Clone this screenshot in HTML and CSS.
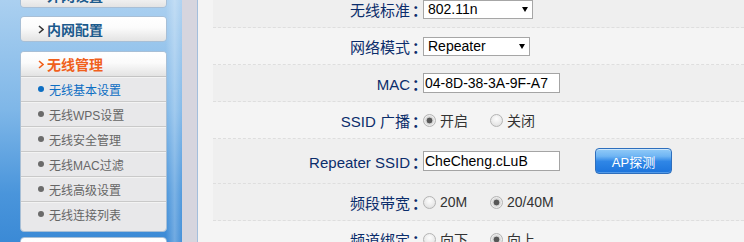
FILE: index.html
```html
<!DOCTYPE html>
<html lang="zh-CN">
<head>
<meta charset="utf-8">
<title>无线基本设置</title>
<link rel="stylesheet" href="styles.css">
</head>
<body>
<div class="page">
  <aside class="side">
    <div class="card c1">
      <div class="head"><svg class="chev" viewBox="0 0 6 9" width="6" height="9"><polyline points="1,1 5,4.5 1,8"/></svg>外网设置</div>
    </div>
    <div class="card c2">
      <div class="head"><svg class="chev" viewBox="0 0 6 9" width="6" height="9"><polyline points="1,1 5,4.5 1,8"/></svg>内网配置</div>
    </div>
    <div class="card c3">
      <div class="head active"><svg class="chev" viewBox="0 0 6 9" width="6" height="9"><polyline points="1,1 5,4.5 1,8"/></svg>无线管理</div>
      <ul class="sub">
        <li class="on"><i class="dot"></i>无线基本设置</li>
        <li><i class="dot"></i>无线WPS设置</li>
        <li><i class="dot"></i>无线安全管理</li>
        <li><i class="dot"></i>无线MAC过滤</li>
        <li><i class="dot"></i>无线高级设置</li>
        <li class="last"><i class="dot"></i>无线连接列表</li>
      </ul>
    </div>
    <div class="card c4">
      <div class="head"><svg class="chev" viewBox="0 0 6 9" width="6" height="9"><polyline points="1,1 5,4.5 1,8"/></svg>高级设置</div>
    </div>
  </aside>
  <div class="gutter"></div>
  <main class="main">
    <div class="form">
      <div class="row alt">
        <div class="lbl">无线标准<span class="colon">：</span></div>
        <div class="val"><span class="selwrap w110"><select class="sel"><option>802.11n</option></select></span></div>
      </div>
      <div class="row">
        <div class="lbl">网络模式<span class="colon">：</span></div>
        <div class="val"><span class="selwrap w107"><select class="sel"><option>Repeater</option></select></span></div>
      </div>
      <div class="row alt">
        <div class="lbl">MAC<span class="colon">：</span></div>
        <div class="val"><input class="txt" type="text" value="04-8D-38-3A-9F-A7"></div>
      </div>
      <div class="row">
        <div class="lbl">SSID 广播<span class="colon">：</span></div>
        <div class="val">
          <label class="opt"><input type="radio" name="bc" checked><span>开启</span></label>
          <label class="opt"><input type="radio" name="bc"><span>关闭</span></label>
        </div>
      </div>
      <div class="row alt tall">
        <div class="lbl">Repeater SSID<span class="colon">：</span></div>
        <div class="val"><input class="txt" type="text" value="CheCheng.cLuB"><button class="btn" type="button">AP探测</button></div>
      </div>
      <div class="row alt">
        <div class="lbl">频段带宽<span class="colon">：</span></div>
        <div class="val">
          <label class="opt"><input type="radio" name="bw"><span>20M</span></label>
          <label class="opt"><input type="radio" name="bw" checked><span>20/40M</span></label>
        </div>
      </div>
      <div class="row">
        <div class="lbl">频道绑定<span class="colon">：</span></div>
        <div class="val">
          <label class="opt"><input type="radio" name="cb"><span>向下</span></label>
          <label class="opt"><input type="radio" name="cb" checked><span>向上</span></label>
        </div>
      </div>
    </div>
  </main>
</div>
</body>
</html>
```
FILE: styles.css
```css
html, body {
  margin: 0;
  padding: 0;
  width: 744px;
  height: 242px;
  overflow: hidden;
  background: #f4f4f4;
  font-family: "Liberation Sans", "Noto Sans CJK SC", sans-serif;
}

.page {
  display: flex;
  height: 242px;
}

/* ---------- sidebar ---------- */
.side {
  width: 182px;
  flex: none;
  box-sizing: border-box;
  padding-left: 20px;
  overflow: hidden;
  background:
    linear-gradient(90deg, rgba(255,255,255,0) 0%, rgba(255,255,255,0) 91%, rgba(255,255,255,0.28) 96%, rgba(255,255,255,0.05) 100%),
    linear-gradient(180deg, #abd0f0 0%, #7fb7e8 45%, #4a95db 80%, #3b8ad6 100%);
}

.card {
  width: 147px;
  box-sizing: border-box;
  border: 1px solid #a8bfd6;
  border-radius: 4px;
  background: #e8e8ea;
  overflow: hidden;
}
.c1 { margin-top: -18px; }
.c2 { margin-top: 8px; }
.c3 { margin-top: 9px; }
.c4 { margin-top: 5px; }

.head {
  height: 24px;
  display: flex;
  align-items: center;
  padding-left: 17px;
  background: linear-gradient(180deg, #ffffff 0%, #fbfbfb 45%, #e3e3e3 100%);
  font-size: 14px;
  font-weight: bold;
  color: #1b5a8c;
}
.chev {
  margin-right: 3px;
  fill: none;
  stroke: #3a3a3a;
  stroke-width: 1.6;
}
.head.active { color: #f0601c; border-bottom: 1px solid #c4c4c4; }
.head.active .chev { stroke: #f0601c; }

.sub {
  list-style: none;
  margin: 0;
  padding: 0 0 5px 0;
}
.sub li {
  height: 24px;
  display: flex;
  align-items: center;
  padding-left: 17px;
  font-size: 12px;
  color: #666;
  border-bottom: 1px solid #c9c9c9;
  box-shadow: inset 0 1px 0 #f3f3f3;
}
.sub li.last { border-bottom: none; }
.dot {
  width: 6px;
  height: 6px;
  border-radius: 50%;
  background: #6b6b6b;
  margin-right: 5px;
  flex: none;
}
.sub li.on { color: #0d6ec3; }
.sub li.on .dot { background: #0d6ec3; }

.gutter {
  width: 15px;
  flex: none;
  background: #d6d5de;
  border-right: 1px solid #a3bedc;
}

/* ---------- main form ---------- */
.main {
  flex: 1;
  overflow: hidden;
  padding-left: 15px;
}
.form { margin-top: -9px; }

.row {
  display: flex;
  align-items: center;
  height: 37px;
  box-sizing: border-box;
  border-bottom: 1px dashed #dedede;
}
.row.alt { background: #efefef; }
.row.tall { height: 45px; }

.lbl {
  width: 207px;
  flex: none;
  text-align: right;
  font-size: 15px;
  color: #0b2d6b;
  white-space: nowrap;
}
.colon {
  display: inline-block;
  width: 8px;
  margin-left: 2px;
  overflow: visible;
  text-align: left;
  font-weight: bold;
  white-space: nowrap;
}
.val {
  display: flex;
  align-items: center;
  padding-left: 3px;
}

.selwrap {
  position: relative;
  display: block;
  height: 19px;
}
.selwrap::after {
  content: "";
  position: absolute;
  right: 5px;
  top: 7px;
  border-left: 3.5px solid transparent;
  border-right: 3.5px solid transparent;
  border-top: 5px solid #000;
}
.w110 { width: 110px; }
.w107 { width: 107px; }
.sel {
  -webkit-appearance: none;
  appearance: none;
  width: 100%;
  height: 19px;
  box-sizing: border-box;
  border: 1px solid #a6a6a6;
  border-radius: 0;
  background: #fff;
  padding: 0 0 0 4px;
  margin: 0;
  font-family: "Liberation Sans", sans-serif;
  font-size: 14px;
  line-height: 17px;
  color: #000;
  outline: none;
}

.txt {
  width: 137px;
  height: 20px;
  box-sizing: border-box;
  border: 1px solid #a4a4a4;
  background: #fff;
  padding: 0 1px;
  margin: 0;
  font-family: "Liberation Sans", sans-serif;
  font-size: 14px;
  color: #000;
  outline: none;
}

.opt {
  display: flex;
  align-items: center;
  width: 67px;
  font-size: 14px;
  color: #333;
}
.opt input {
  -webkit-appearance: none;
  appearance: none;
  width: 13px;
  height: 13px;
  margin: 0 4px 0 0;
  border-radius: 50%;
  border: 1px solid #b4b4b4;
  box-sizing: border-box;
  background: radial-gradient(circle at 50% 35%, #fdfdfd 0%, #e9e9e9 60%, #d6d6d6 100%);
  flex: none;
}
.opt input:checked {
  background: radial-gradient(circle, #575757 0, #575757 2.6px, #cfcfcf 3.2px, #ececec 5px, #dcdcdc 100%);
}

.btn {
  margin-left: 35px;
  width: 77px;
  height: 26px;
  box-sizing: border-box;
  border: 1px solid #2e6fbd;
  border-radius: 4px;
  background: linear-gradient(180deg, #92cbf8 0%, #6fb5f3 30%, #2f86e6 52%, #1c74dc 100%);
  box-shadow: inset 0 1px 0 rgba(255,255,255,0.55), inset 0 -1px 0 rgba(120,180,240,0.6);
  color: #fff;
  font-family: "Liberation Sans", "Noto Sans CJK SC", sans-serif;
  font-size: 13px;
  padding: 0;
}
```
